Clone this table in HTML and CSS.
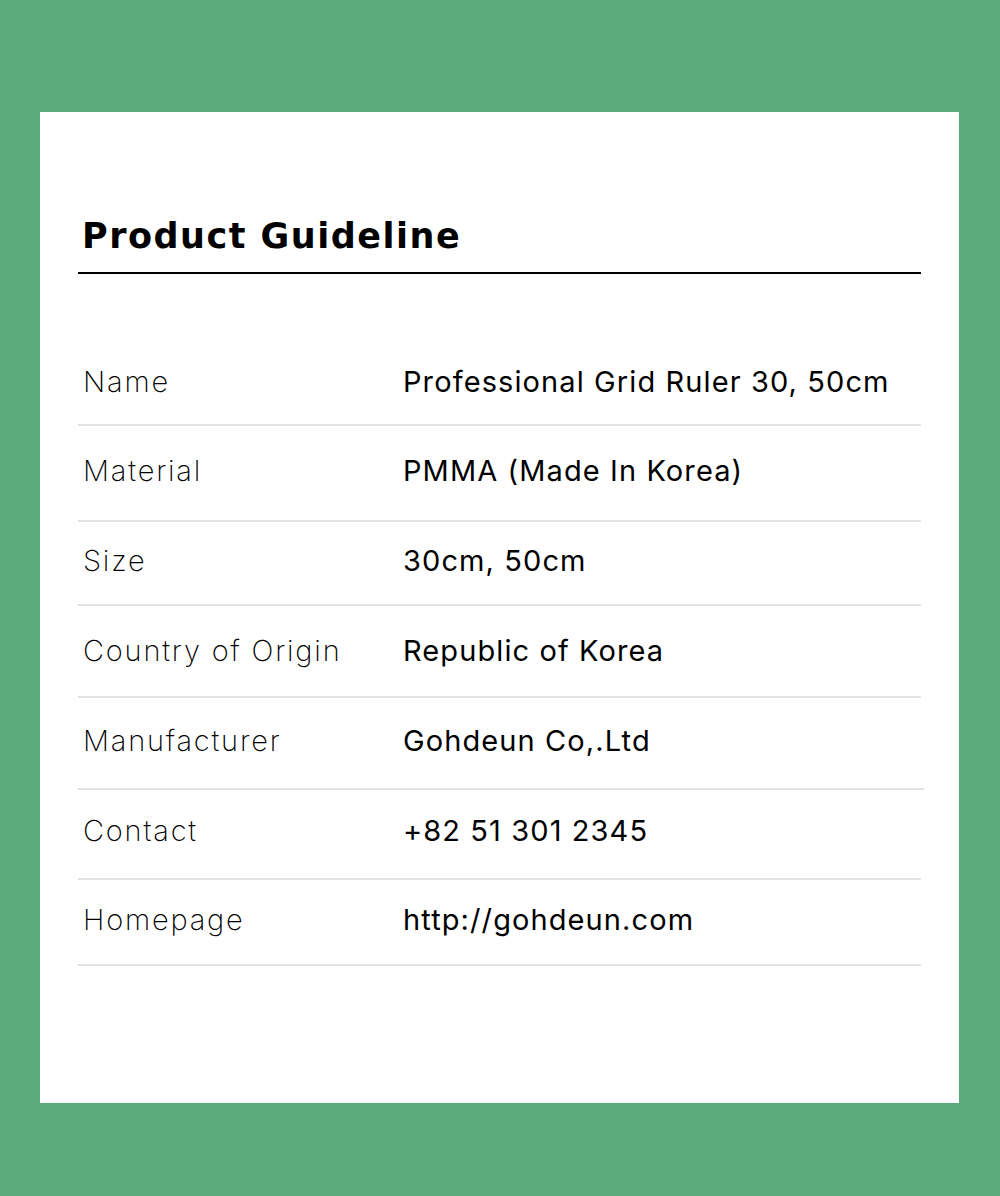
FILE: index.html
```html
<!DOCTYPE html>
<html lang="en">
<head>
<meta charset="utf-8">
<title>Product Guideline</title>
<link rel="stylesheet" href="styles.css">
</head>
<body>
<main class="card">
  <h1 class="title">Product Guideline</h1>
  <dl class="specs">
    <div class="row"><dt class="label">Name</dt><dd class="value">Professional Grid Ruler 30, 50cm</dd></div>
    <div class="row"><dt class="label">Material</dt><dd class="value">PMMA (Made In Korea)</dd></div>
    <div class="row"><dt class="label">Size</dt><dd class="value">30cm, 50cm</dd></div>
    <div class="row"><dt class="label">Country of Origin</dt><dd class="value">Republic of Korea</dd></div>
    <div class="row"><dt class="label">Manufacturer</dt><dd class="value">Gohdeun Co,.Ltd</dd></div>
    <div class="row"><dt class="label">Contact</dt><dd class="value">+82 51 301 2345</dd></div>
    <div class="row"><dt class="label">Homepage</dt><dd class="value">http://gohdeun.com</dd></div>
  </dl>
</main>
</body>
</html>
```
FILE: styles.css
```css
html, body {
  margin: 0;
  padding: 0;
}
body {
  background: #5baa7d;
  padding: 112px 41px 93px 40px;
  font-family: Inter, "Liberation Sans", sans-serif;
  color: #000;
}
.card {
  background: #fff;
  height: 991px;
  box-sizing: border-box;
  padding: 100px 38px 0 38px;
}
.title {
  margin: 0;
  padding: 0 0 12px 4px;
  font-family: "DejaVu Sans", Inter, sans-serif;
  font-size: 35px;
  line-height: 48px;
  font-weight: 700;
  letter-spacing: 1.5px;
  border-bottom: 2px solid #000;
}
.specs {
  margin: 62px 0 0 0;
  padding: 0;
}
.row {
  display: flex;
  align-items: center;
  height: 90px;
  padding: 0 0 5px 5px;
  box-sizing: border-box;
  border-bottom: 2px solid #e3e3e3;
}
.row:nth-child(1) { padding: 2px 0 0 5px; }
.row:nth-child(2) { height: 96px; }
.row:nth-child(3) { height: 84px; }
.row:nth-child(4) { height: 92px; padding-bottom: 2px; }
.row:nth-child(5) { height: 92px; margin-right: -3px; }
.row:nth-child(6) { height: 90px; padding-bottom: 7px; }
.row:nth-child(7) { height: 86px; }
.label {
  width: 320px;
  font-size: 29px;
  font-weight: 200;
  letter-spacing: 1.8px;
}
.value {
  margin: 0;
  font-size: 29px;
  font-weight: 400;
  letter-spacing: 1.1px;
}
```
